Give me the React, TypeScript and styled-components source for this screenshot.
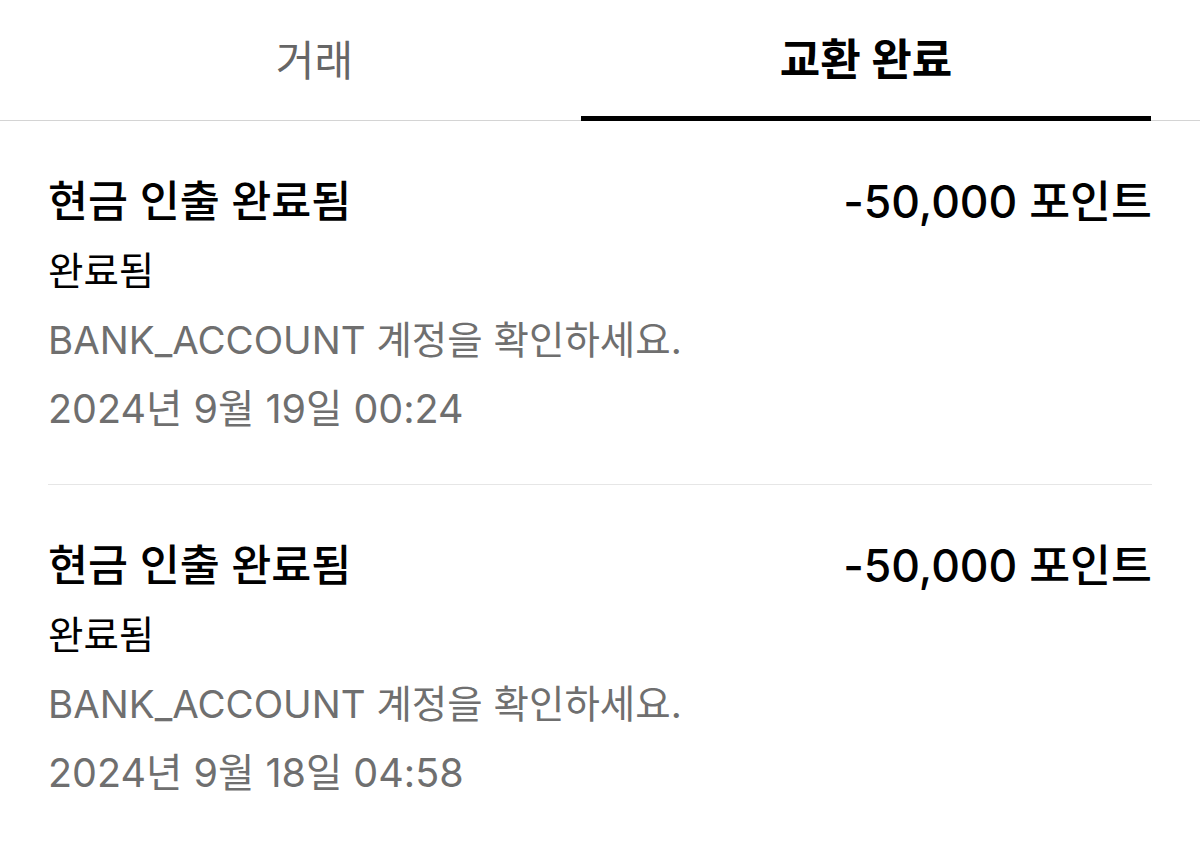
import { Fragment, useState } from 'react'
import styled, { createGlobalStyle } from 'styled-components'

const GlobalStyle = createGlobalStyle`
  * {
    margin: 0;
    padding: 0;
    box-sizing: border-box;
  }

  body {
    background-color: #ffffff;
    font-family: Inter, 'Noto Sans CJK KR', sans-serif;
    color: #000000;
  }
`

const TabBar = styled.nav`
  display: grid;
  grid-template-columns: 533px 570px;
  padding-left: 48px;
  border-bottom: 1px solid #d4d4d4;
`

const Tab = styled.button<{ $active: boolean }>`
  height: 121px;
  margin-bottom: -1px;
  padding-bottom: 2px;
  display: flex;
  align-items: center;
  justify-content: center;
  background: none;
  border: none;
  border-bottom: 5px solid ${props => (props.$active ? '#000000' : 'transparent')};
  font-family: inherit;
  font-size: ${props => (props.$active ? 44 : 42)}px;
  font-weight: ${props => (props.$active ? 700 : 400)};
  color: ${props => (props.$active ? '#000000' : '#666666')};
  cursor: pointer;
`

const List = styled.section`
  padding: 0 48px;
`

const Item = styled.article`
  padding: 42px 0 40px;
  border-bottom: 1px solid #e6e6e6;

  &:last-child {
    border-bottom: none;
  }
`

const TopRow = styled.div`
  display: flex;
  justify-content: space-between;
  align-items: center;
  height: 74px;
  padding-bottom: 4px;
`

const Title = styled.h2`
  font-size: 43.5px;
  font-weight: 500;
`

const Amount = styled.span`
  font-size: 44.5px;
  font-weight: 500;
`

const Line = styled.p<{ $muted?: boolean }>`
  font-size: 38.5px;
  line-height: 69px;
  color: ${props => (props.$muted ? '#6f6f6f' : '#000000')};
`

const DateLine = styled(Line)`
  font-size: 39.5px;
`

const items = [
  { id: 1, date: '2024년 9월 19일 00:24' },
  { id: 2, date: '2024년 9월 18일 04:58' }
]

function App() {
  const [tab, setTab] = useState(1)

  return (
    <Fragment>
      <GlobalStyle />

      <TabBar>
        <Tab $active={tab === 0} onClick={() => setTab(0)}>거래</Tab>
        <Tab $active={tab === 1} onClick={() => setTab(1)}>교환 완료</Tab>
      </TabBar>

      <List>
        {items.map(item => (
          <Item key={item.id}>
            <TopRow>
              <Title>현금 인출 완료됨</Title>
              <Amount>-50,000 포인트</Amount>
            </TopRow>
            <Line>완료됨</Line>
            <Line $muted>BANK_ACCOUNT 계정을 확인하세요.</Line>
            <DateLine $muted>{item.date}</DateLine>
          </Item>
        ))}
      </List>
    </Fragment>
  )
}

export default App
